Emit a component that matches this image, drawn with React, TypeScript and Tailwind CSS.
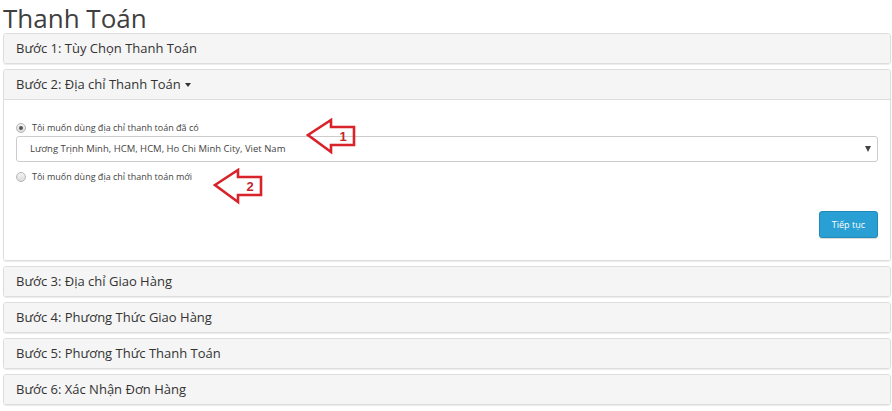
const steps = [
  "Bước 1: Tùy Chọn Thanh Toán",
  "Bước 2: Địa chỉ Thanh Toán",
  "Bước 3: Địa chỉ Giao Hàng",
  "Bước 4: Phương Thức Giao Hàng",
  "Bước 5: Phương Thức Thanh Toán",
  "Bước 6: Xác Nhận Đơn Hàng",
];

function Radio({ checked }: { checked?: boolean }) {
  return (
    <span className="size-[10px] rounded-full border border-[#b5b5b5] bg-gradient-to-b from-[#f4f4f4] to-[#dcdcdc] flex items-center justify-center shrink-0">
      {checked && <span className="size-[4px] rounded-full bg-[#555]" />}
    </span>
  );
}

function PanelHeading({ title, caret }: { title: string; caret?: boolean }) {
  return (
    <div className="h-[29px] px-[12px] flex items-center bg-[#f5f5f5] text-[13px] text-[#333]">
      {title}
      {caret && (
        <span className="ml-[4px] w-0 h-0 border-l-[3.5px] border-r-[3.5px] border-t-[4px] border-l-transparent border-r-transparent border-t-[#333]" />
      )}
    </div>
  );
}

function Arrow({ label, className }: { label: string; className: string }) {
  return (
    <svg className={`absolute ${className}`} width="52" height="38" viewBox="0 0 52 38">
      <path
        d="M2 17 L25 2 L25 9 L48 9 L48 27 L25 27 L25 34 Z"
        fill="none"
        stroke="#d8232a"
        strokeWidth="2.6"
        strokeLinejoin="miter"
      />
      <text x="37" y="23" textAnchor="middle" fontSize="13" fontWeight="bold" fill="#c0282d" fontFamily="'Liberation Sans', Arial, sans-serif">
        {label}
      </text>
    </svg>
  );
}

export default function App() {
  return (
    <div className="bg-white w-[892px] h-[411px] pl-[3px] pr-[1px] font-['Open_Sans',sans-serif] text-[#333] overflow-hidden">
      <h1 className="h-[33px] text-[26px] leading-[36px] text-[#3f3f3f] font-normal">Thanh Toán</h1>
      <div className="flex flex-col gap-[5px]">
        <div className="border border-[#ddd] rounded-[3px] shadow-[0_1px_1px_rgba(0,0,0,0.08)] overflow-hidden">
          <PanelHeading title={steps[0]} />
        </div>

        <div className="border border-[#ddd] rounded-[3px] shadow-[0_1px_1px_rgba(0,0,0,0.08)] overflow-hidden">
          <div className="border-b border-[#ddd]">
            <PanelHeading title={steps[1]} caret />
          </div>
          <div className="relative bg-white px-[12px] pt-[21px] pb-[22px]">
            <label className="flex items-center gap-[6px] text-[9px] text-[#444] h-[14px]">
              <Radio checked /> Tôi muốn dùng địa chỉ thanh toán đã có
            </label>
            <div className="mt-[1px] h-[26px] border border-[#ccc] rounded-[3px] flex items-center justify-between pl-[13px] pr-[6px] text-[9.5px] text-[#444]">
              <span>Lương Trịnh Minh, HCM, HCM, Ho Chi Minh City, Viet Nam</span>
              <span className="w-0 h-0 border-l-[3.5px] border-r-[3.5px] border-t-[6px] border-l-transparent border-r-transparent border-t-[#444]" />
            </div>
            <label className="mt-[8px] flex items-center gap-[6px] text-[9px] text-[#444] h-[14px]">
              <Radio /> Tôi muốn dùng địa chỉ thanh toán mới
            </label>
            <div className="flex justify-end mt-[27px]">
              <button className="h-[27px] px-[12px] rounded-[3px] bg-[#2a9fd3] border border-[#2389b8] text-white text-[9px] shadow-[0_1px_1px_rgba(0,0,0,0.15)]">
                Tiếp tục
              </button>
            </div>
            <Arrow label="1" className="left-[302px] top-[18px]" />
            <Arrow label="2" className="left-[209px] top-[68px]" />
          </div>
        </div>

        {steps.slice(2).map((s) => (
          <div key={s} className="border border-[#ddd] rounded-[3px] shadow-[0_1px_1px_rgba(0,0,0,0.08)] overflow-hidden">
            <PanelHeading title={s} />
          </div>
        ))}
      </div>
    </div>
  );
}
